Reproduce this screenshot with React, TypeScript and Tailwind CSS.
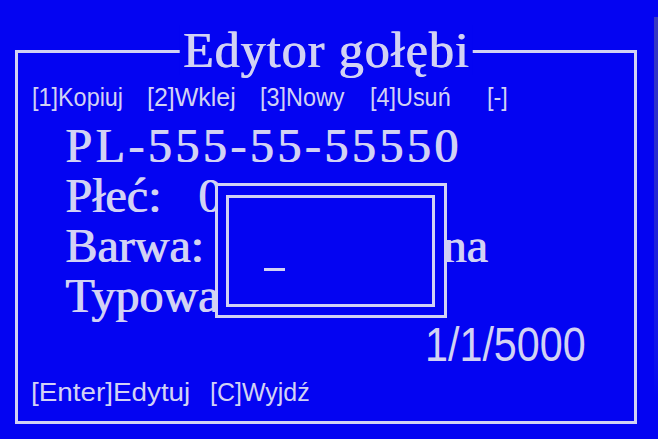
import React from "react";

export default function App() {
  return (
    <div className="flex h-[439px] w-[658px] overflow-hidden bg-[#0404f2] text-[#d2d2f4]">
      <div className="w-[654px] pl-[15px] pt-[50px]">
        <div className="relative h-[374px] w-[622px] border-[3px] border-[#d2d2f4]">
          {/* title sits on the top border */}
          <div className="absolute left-1/2 top-[-28px] -translate-x-1/2 whitespace-nowrap bg-[#0404f2] px-[3px] font-['Liberation_Serif',serif] text-[50px] leading-[50px] tracking-[1px] [text-shadow:1px_0_0_#d2d2f4]">
            Edytor gołębi
          </div>

          <div className="flex whitespace-pre pl-[14px] pt-[32px] font-['Liberation_Sans',sans-serif] text-[26px] leading-[24px]">
            <span className="w-[115px]">
              <span className="inline-block origin-left scale-x-[0.9]">[1]Kopiuj</span>
            </span>
            <span className="w-[113px]">
              <span className="inline-block origin-left scale-x-[0.96]">[2]Wklej</span>
            </span>
            <span className="w-[110px]">
              <span className="inline-block origin-left scale-x-[0.9]">[3]Nowy</span>
            </span>
            <span className="w-[117px]">
              <span className="inline-block origin-left scale-x-[0.9]">[4]Usuń</span>
            </span>
            <span>
              <span className="inline-block origin-left scale-x-[0.9]">[-]</span>
            </span>
          </div>

          <div className="mt-[12px] pl-[47px] font-['Liberation_Serif',serif] text-[48px] leading-[50px] [text-shadow:1px_0_0_#d2d2f4]">
            <div className="h-[50px] whitespace-pre tracking-[3.5px]">PL-555-55-55550</div>
            <div className="flex h-[50px] whitespace-pre">
              <span className="w-[133px]">Płeć:</span>
              <span>0</span>
            </div>
            <div className="flex h-[50px] whitespace-pre">
              <span className="w-[180px]">Barwa:</span>
              <span>Szpakowana</span>
            </div>
            <div className="flex h-[50px] whitespace-pre">
              <span>Typowa: Tak</span>
            </div>
          </div>

          <div className="pl-[407px] font-['Liberation_Sans',sans-serif] text-[48px] leading-[48px]">
            <span className="inline-block origin-left scale-x-[0.86]">1/1/5000</span>
          </div>

          <div className="mt-[11px] flex whitespace-pre pl-[13px] font-['Liberation_Sans',sans-serif] text-[26px] leading-[24px]">
            <span className="w-[179px]">
              <span className="inline-block origin-left scale-x-[1.07]">[Enter]Edytuj</span>
            </span>
            <span>
              <span className="inline-block origin-left scale-x-[0.96]">[C]Wyjdź</span>
            </span>
          </div>

          {/* input popup */}
          <div className="absolute left-[197px] top-[130px] h-[135px] w-[232px] border-[3px] border-[#d2d2f4] bg-[#0404f2] pb-[8px] pl-[8px] pr-[9px] pt-[9px]">
            <div className="h-full w-full border-[3px] border-[#d2d2f4] pl-[35px] pt-[70px]">
              <div className="h-[3px] w-[21px] bg-[#d2d2f4]" />
            </div>
          </div>
        </div>
      </div>
      <div className="mt-[17px] h-[380px] w-[4px] bg-linear-to-b from-[#3838c0] via-[#2424d4] to-[#0404f2]" />
    </div>
  );
}
